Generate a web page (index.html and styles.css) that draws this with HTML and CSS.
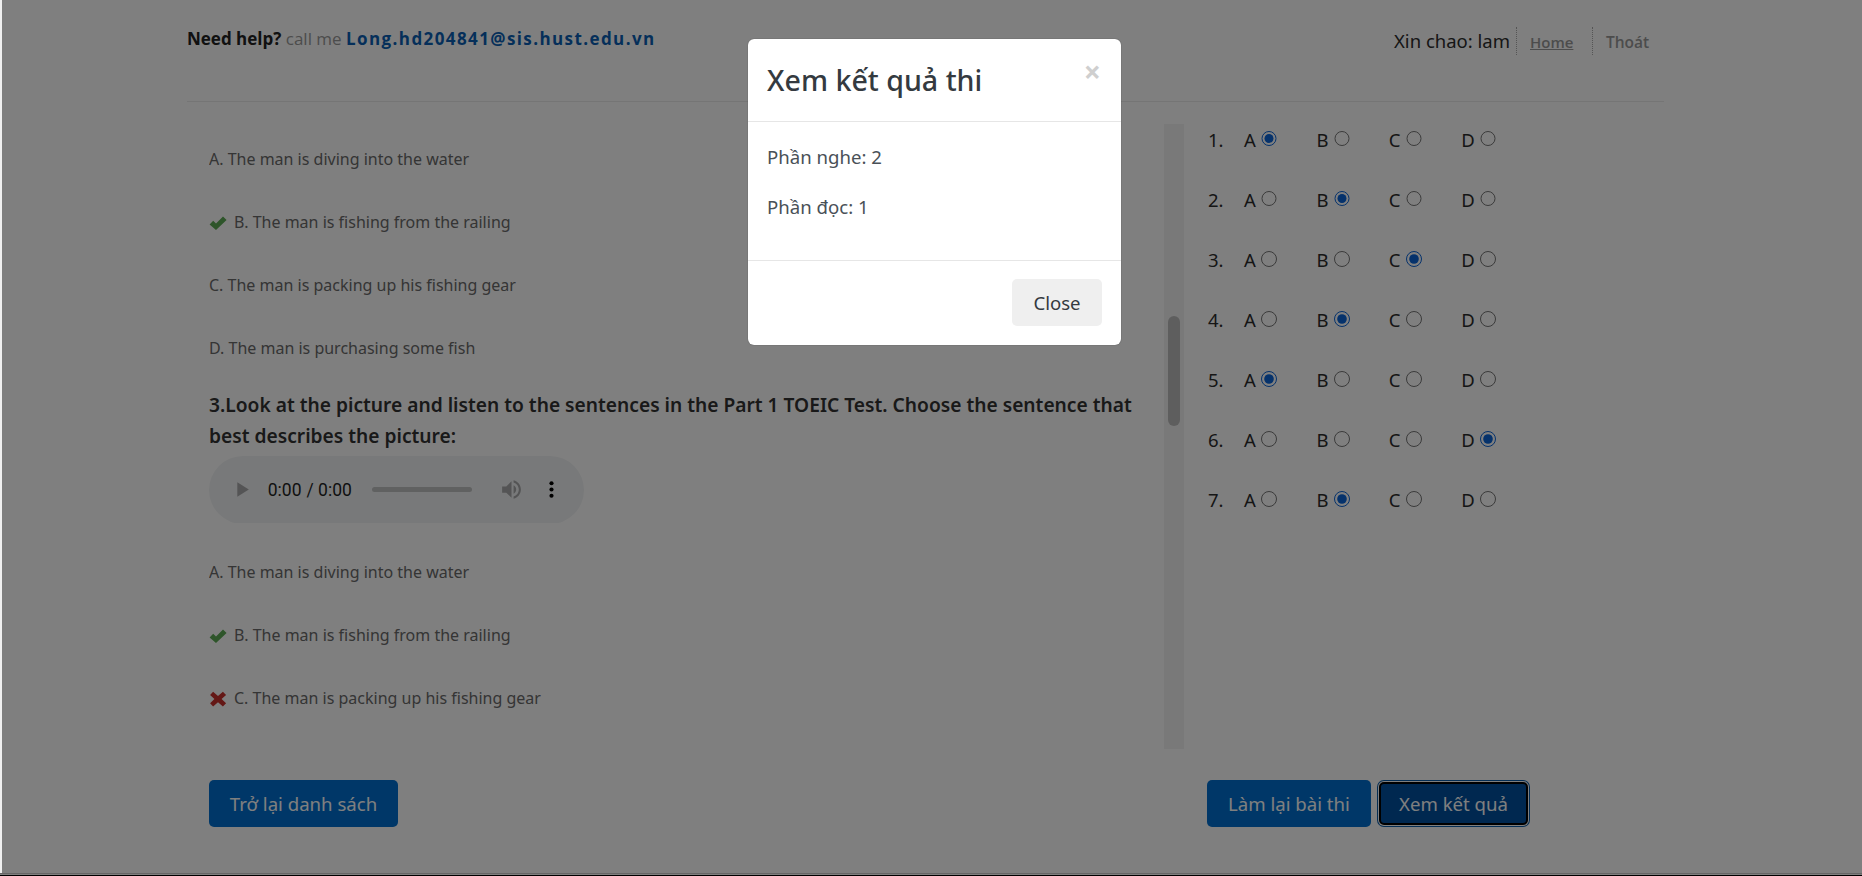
FILE: index.html
```html
<!DOCTYPE html>
<html lang="vi">
<head>
<meta charset="utf-8">
<title>Xem kết quả thi</title>
<link rel="stylesheet" href="styles.css">
</head>
<body>
<div class="page">
  <header class="top">
    <div class="help"><b>Need help?</b> <span class="call">call me</span> <a class="mail">Long.hd204841@sis.hust.edu.vn</a></div>
    <div class="user">
      <span class="hello">Xin chao: lam</span>
      <a class="nav nav-home">Home</a>
      <a class="nav nav-exit">Thoát</a>
    </div>
  </header>
  <main class="exam">
    <section class="questions">
      <p class="opt opt-first">A. The man is diving into the water</p>
      <p class="opt"><svg class="mark" viewBox="0 0 18 16"><path class="ok" d="M0.6 9.4 L4.2 5.8 L7 8.4 L14 1.6 L17.6 5 L7 15 Z"/></svg> B. The man is fishing from the railing</p>
      <p class="opt">C. The man is packing up his fishing gear</p>
      <p class="opt">D. The man is purchasing some fish</p>
      <h3 class="ask">3.Look at the picture and listen to the sentences in the Part 1 TOEIC Test. Choose the sentence that best describes the picture:</h3>
      <audio class="player" controls></audio>
      <p class="opt opt-after">A. The man is diving into the water</p>
      <p class="opt"><svg class="mark" viewBox="0 0 18 16"><path class="ok" d="M0.6 9.4 L4.2 5.8 L7 8.4 L14 1.6 L17.6 5 L7 15 Z"/></svg> B. The man is fishing from the railing</p>
      <p class="opt"><svg class="mark" viewBox="0 0 18 17"><path class="bad" d="M3.8 0.8 L9 5.2 L14.2 0.8 L17.6 4.2 L12.8 8.5 L17.6 13 L14.2 16.4 L9 12 L3.8 16.4 L0.6 13 L5.2 8.5 L0.6 4.2 Z"/></svg> C. The man is packing up his fishing gear</p>
    </section>
    <div class="track"><div class="thumb"></div></div>
    <section class="sheet">
      <div class="row"><span class="num">1.</span><label class="cell">A <input type="radio" name="q1" checked></label><label class="cell">B <input type="radio" name="q1"></label><label class="cell">C <input type="radio" name="q1"></label><label class="cell">D <input type="radio" name="q1"></label></div>
      <div class="row"><span class="num">2.</span><label class="cell">A <input type="radio" name="q2"></label><label class="cell">B <input type="radio" name="q2" checked></label><label class="cell">C <input type="radio" name="q2"></label><label class="cell">D <input type="radio" name="q2"></label></div>
      <div class="row"><span class="num">3.</span><label class="cell">A <input type="radio" name="q3"></label><label class="cell">B <input type="radio" name="q3"></label><label class="cell">C <input type="radio" name="q3" checked></label><label class="cell">D <input type="radio" name="q3"></label></div>
      <div class="row"><span class="num">4.</span><label class="cell">A <input type="radio" name="q4"></label><label class="cell">B <input type="radio" name="q4" checked></label><label class="cell">C <input type="radio" name="q4"></label><label class="cell">D <input type="radio" name="q4"></label></div>
      <div class="row"><span class="num">5.</span><label class="cell">A <input type="radio" name="q5" checked></label><label class="cell">B <input type="radio" name="q5"></label><label class="cell">C <input type="radio" name="q5"></label><label class="cell">D <input type="radio" name="q5"></label></div>
      <div class="row"><span class="num">6.</span><label class="cell">A <input type="radio" name="q6"></label><label class="cell">B <input type="radio" name="q6"></label><label class="cell">C <input type="radio" name="q6"></label><label class="cell">D <input type="radio" name="q6" checked></label></div>
      <div class="row"><span class="num">7.</span><label class="cell">A <input type="radio" name="q7"></label><label class="cell">B <input type="radio" name="q7" checked></label><label class="cell">C <input type="radio" name="q7"></label><label class="cell">D <input type="radio" name="q7"></label></div>
    </section>
  </main>
  <footer class="actions">
    <button class="btn btn-back">Trở lại danh sách</button>
    <div class="actions-right">
      <button class="btn btn-redo">Làm lại bài thi</button>
      <button class="btn btn-focus">Xem kết quả</button>
    </div>
  </footer>
</div>
<div class="edge"></div>
<div class="backdrop"></div>
<div class="modal">
  <div class="modal-head">
    <h4 class="modal-title">Xem kết quả thi</h4>
    <span class="close">×</span>
  </div>
  <div class="modal-body">
    <p class="score">Phần nghe: 2</p>
    <p class="score">Phần đọc: 1</p>
  </div>
  <div class="modal-foot">
    <button class="btn-close">Close</button>
  </div>
</div>
<div class="base-line"></div>
</body>
</html>
```
FILE: styles.css
```css
* { box-sizing: border-box; }
html, body { margin: 0; height: 876px; overflow: hidden; background: #fff; }
body { font-family: "Noto Sans", "Open Sans", sans-serif; color: #212529; font-size: 16px; position: relative; }

.page { width: 1477px; margin-left: 187px; }

.top { height: 102px; border-bottom: 1px solid #ebebeb; display: flex; justify-content: space-between; align-items: flex-start; }
.help { margin-top: 27px; font-family: "Open Sans", sans-serif; font-size: 17px; line-height: 24px; }
.help b { font-weight: 700; color: #222; }
.call { color: #999; }
.mail { color: #0a5fb4; font-weight: 700; letter-spacing: 1.4px; }
.user { display: flex; align-items: center; margin-top: 27px; height: 28px; }
.hello { font-size: 18.5px; color: #2c2c2c; margin-right: 6px; margin-top: -2px; }
.nav { font-family: "Open Sans", sans-serif; font-size: 15px; font-weight: 600; color: #999; border-left: 1px dotted #aaa; height: 28px; line-height: 30px; }
.nav-home { padding-left: 13px; width: 76px; text-decoration: underline; }
.nav-exit { padding-left: 13px; width: 72px; font-size: 15.5px; }

.exam { display: flex; height: 647px; }
.questions { width: 955px; height: 625px; margin: 22px 0 0 22px; overflow: hidden; }
.opt { margin: 0; height: 63.2px; font-size: 16px; line-height: 24px; color: #6a6a6a; display: flex; align-items: center; gap: 7px; white-space: nowrap; }
.opt-first { margin-top: 3px; }
.mark { width: 18px; height: 16px; flex: none; margin-top: 2px; }
.ok { fill: #5cab54; }
.bad { fill: #c9302c; }
.ask { margin: 0; font-size: 19.2px; line-height: 31px; font-weight: 600; color: #333; padding-top: 9px; }
.player { display: block; width: 300px; height: 54px; zoom: 1.25; margin-top: 3.8px; }
.opt-after { margin-top: 17px; }

.track { width: 20px; height: 625px; margin-top: 22px; background: #f2f2f2; position: relative; flex: none; }
.thumb { position: absolute; left: 4px; top: 192px; width: 12px; height: 110px; border-radius: 6px; background: #bdbdbd; }

.sheet { margin-left: 24px; }
.row { display: flex; height: 60.1px; align-items: center; font-size: 18.5px; color: #2c2c2c; }
.row:first-child { margin-top: 7px; }
.num { width: 36px; }
.cell { width: 72.4px; display: flex; align-items: center; gap: 5.5px; }
.cell input { width: 15.6px; height: 15.6px; margin: 0 0 1px 0; accent-color: #0a64d8; }

.actions { display: flex; margin-left: 22px; margin-top: 31px; }
.btn { height: 47px; border: 0; border-radius: 5px; background: #006fd0; color: #fff; font: 18.6px "Noto Sans", sans-serif; padding: 0; }
.btn-back { width: 189px; }
.actions-right { margin-left: 809px; display: flex; gap: 8px; }
.btn-redo { width: 164px; }
.btn-focus { width: 149px; height: 43.5px; margin-top: 1.5px; background: #0050a0; border: 2px solid #000; box-shadow: 0 0 0 1px #fff, 0 0 0 2px #0a5ca8; }

.edge { position: absolute; left: 0; top: 0; width: 2px; height: 876px; background: #f0f0f0; }
.backdrop { position: absolute; left: 2px; top: 0; width: 1860px; height: 873px; background: rgba(0,0,0,.5); }
.base-line { position: absolute; left: 0; top: 873px; width: 1862px; height: 3px; background: #808080; border-top: 1px solid #666; border-bottom: 1px solid #000; }

.modal { position: absolute; left: 748px; top: 39px; width: 373px; height: 306px; background: #fff; border-radius: 6px; box-shadow: 0 0 1px rgba(0,0,0,.6); display: flex; flex-direction: column; }
.modal-head { height: 83px; border-bottom: 1px solid #e6e6e6; padding: 19px; display: flex; justify-content: space-between; }
.modal-title { margin: 0; font-size: 28.6px; line-height: 44px; font-weight: 500; color: #343a40; }
.close { font-size: 30px; line-height: 30px; color: #cfcfcf; font-weight: 700; margin-top: -1px; margin-right: 1px; }
.modal-body { height: 139px; border-bottom: 1px solid #e6e6e6; padding: 20px 19px 0; }
.score { margin: 0 0 21px; font-size: 18.6px; line-height: 29px; color: #495057; }
.modal-foot { flex: 1; display: flex; justify-content: flex-end; padding: 18px 19px; }
.btn-close { width: 90px; height: 47px; border: 0; border-radius: 5px; background: #efefef; color: #343a40; font: 18.6px "Noto Sans", sans-serif; }
```
